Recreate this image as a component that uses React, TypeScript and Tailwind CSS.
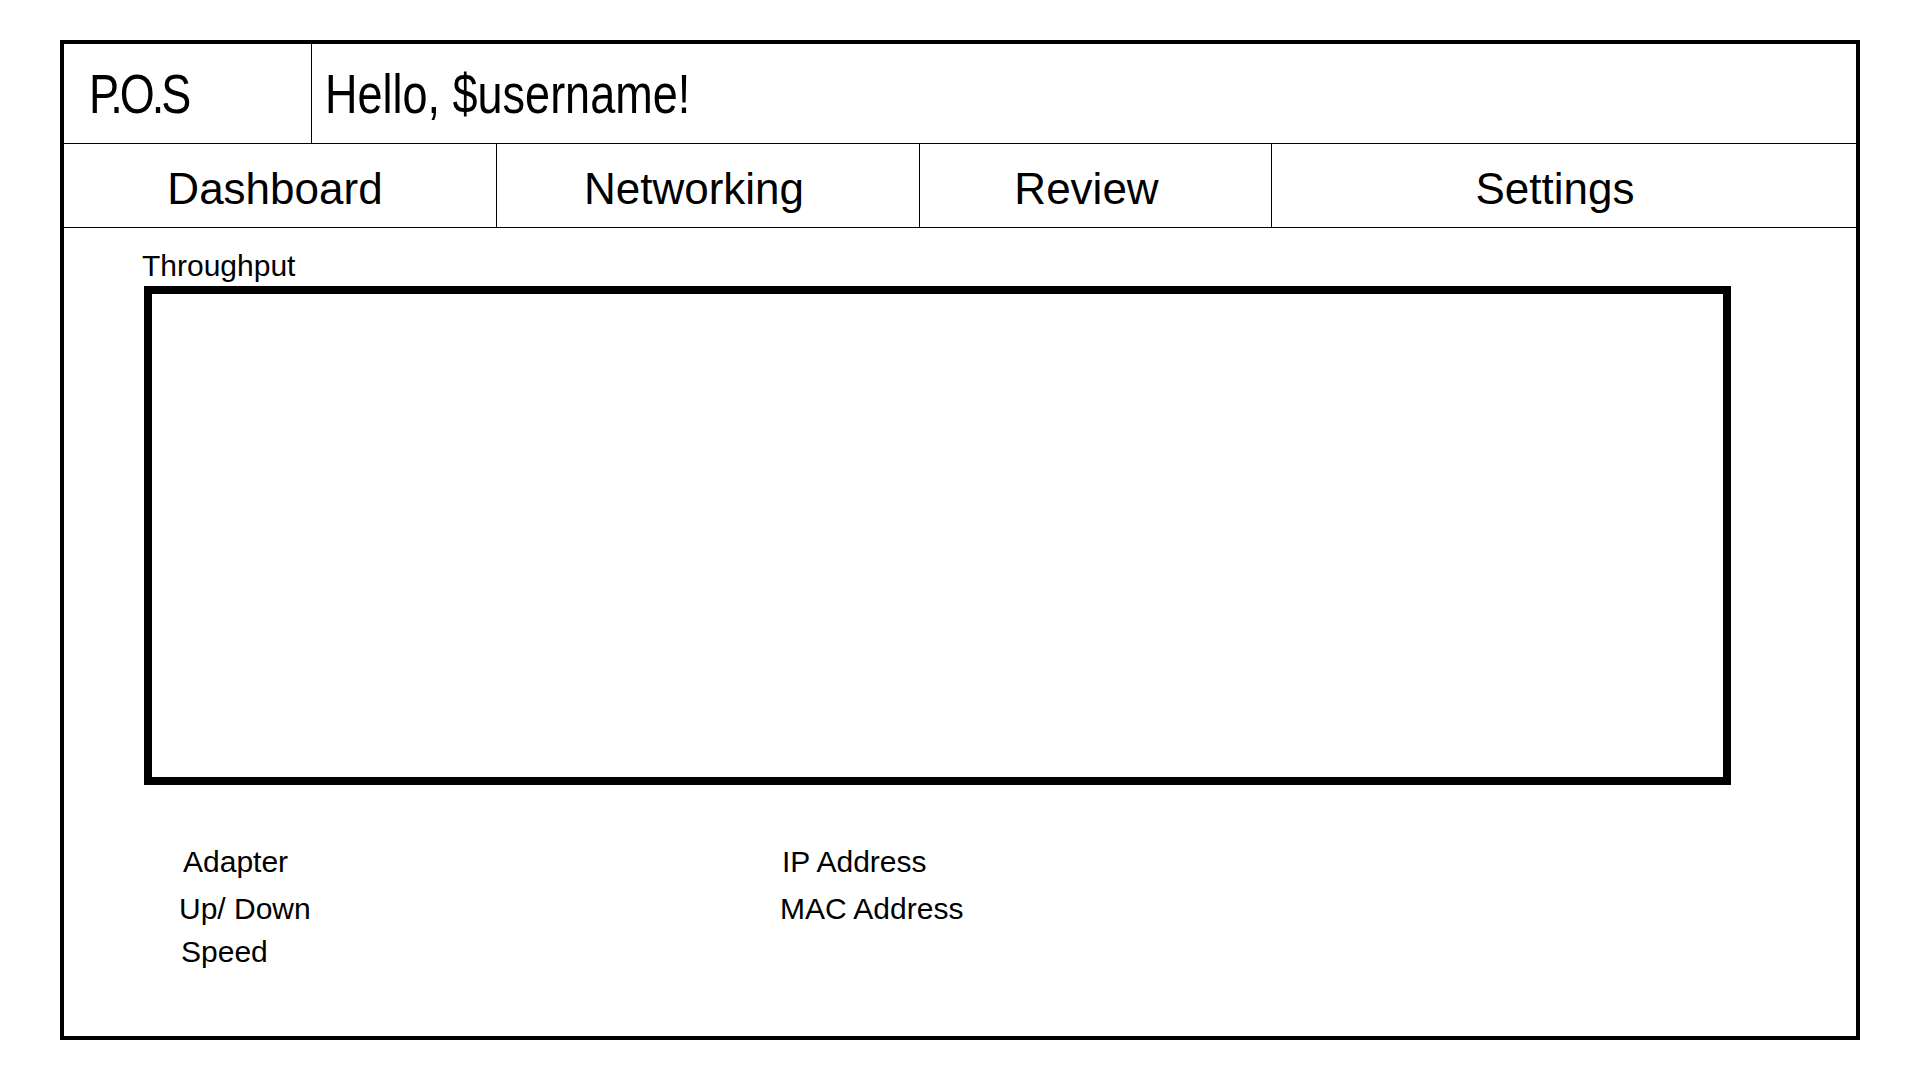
const navItems = [
  { label: "Dashboard", className: "w-[433px] border-r pr-[10px]" },
  { label: "Networking", className: "w-[423px] border-r pr-[28px]" },
  { label: "Review", className: "w-[352px] border-r pr-[18px]" },
  { label: "Settings", className: "flex-1 pr-[18px]" },
];

const App = () => {
  return (
    <div className="w-[1920px] h-[1080px] bg-white px-[60px] py-[40px] text-black font-['Liberation_Sans',Arial,sans-serif]">
      <div className="flex flex-col w-full h-full border-4 border-black">
        {/* top bar - text is stretched tall in the mockup */}
        <div className="flex h-[100px] border-b border-black text-[45px]">
          <div className="w-[248px] flex items-center pl-[25px] border-r border-black">
            <span className="inline-block scale-y-125 tracking-[-3px]">P.O.S</span>
          </div>
          <div className="flex-1 flex items-center pl-[13px]">
            <span className="inline-block scale-y-125">Hello, $username!</span>
          </div>
        </div>

        {/* tabs */}
        <div className="flex h-[84px] border-b border-black">
          {navItems.map((item) => (
            <div
              key={item.label}
              className={`flex items-center justify-center pt-[6px] border-black text-[44px] ${item.className}`}
            >
              {item.label}
            </div>
          ))}
        </div>

        {/* throughput chart */}
        <div className="flex flex-col pt-[21px]">
          <div className="pl-[78px] text-[30px] leading-[34px]">Throughput</div>
          <div className="ml-[80px] mt-[3px] w-[1587px] h-[499px] border-8 border-black" />
        </div>

        {/* adapter info */}
        <div className="flex mt-[60px] ml-[115px] text-[30px] leading-[34px]">
          <div className="flex flex-col w-[601px]">
            <span className="ml-[4px]">Adapter</span>
            <span className="mt-[13px]">Up/ Down</span>
            <span className="mt-[9px] ml-[2px]">Speed</span>
          </div>
          <div className="flex flex-col">
            <span className="ml-[2px]">IP Address</span>
            <span className="mt-[13px]">MAC Address</span>
          </div>
        </div>
      </div>
    </div>
  );
};

export default App;
